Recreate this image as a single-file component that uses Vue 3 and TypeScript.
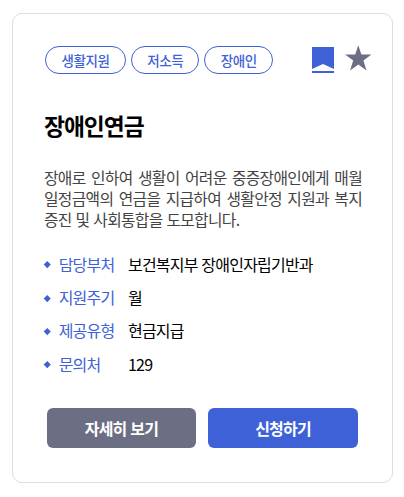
<script setup lang="ts">
interface Detail { label: string; value: string }
const tags: string[] = ['생활지원', '저소득', '장애인']
const lines: string[] = [
  '장애로 인하여 생활이 어려운 중증장애인에게 매월',
  '일정금액의 연금을 지급하여 생활안정 지원과 복지',
  '증진 및 사회통합을 도모합니다.',
]
const details: Detail[] = [
  { label: '담당부처', value: '보건복지부 장애인자립기반과' },
  { label: '지원주기', value: '월' },
  { label: '제공유형', value: '현금지급' },
  { label: '문의처', value: '129' },
]
</script>

<template>
  <article class="card">
    <header class="top">
      <ul class="tags">
        <li v-for="tag in tags" :key="tag" class="tag">{{ tag }}</li>
      </ul>
      <div class="icons">
        <svg class="bookmark" width="22" height="28" viewBox="0 0 22 28"><path d="M0 1H22V23L11 18L0 23Z" fill="#3e61d7" /><path d="M0 25H22V27H0Z" fill="#3e61d7" /></svg>
        <svg class="star" width="27" height="28" viewBox="0 0 27 28"><path d="M13.3 -0.8L16.4 8.6H26.5L18.4 14.6L21.5 24.5L13.3 18.6L5.1 24.5L8.2 14.6L0.1 8.6H10.2Z" fill="#6c6f83" /></svg>
      </div>
    </header>
    <h2 class="title">장애인연금</h2>
    <p class="desc"><span v-for="line in lines" :key="line" class="line">{{ line }}</span></p>
    <dl class="details">
      <div v-for="item in details" :key="item.label" class="row">
        <dt>{{ item.label }}</dt>
        <dd>{{ item.value }}</dd>
      </div>
    </dl>
    <div class="actions">
      <button class="btn gray">자세히 보기</button>
      <button class="btn blue">신청하기</button>
    </div>
  </article>
</template>

<style>
body { background: #fff; }
</style>
<style scoped>
.card { box-sizing: border-box; width: 381px; height: 470px; margin: 13px 0 0 12px; padding: 32px 31px 0; border: 1px solid #ddd; border-radius: 10px; background: #fff; font-family: "Noto Sans CJK KR", sans-serif; letter-spacing: -0.8px; word-spacing: 1px; }
.top { display: flex; justify-content: space-between; height: 28px; }
.tags { display: flex; gap: 5px; margin: 0; padding: 0 0 0 1px; list-style: none; }
.tag { box-sizing: border-box; height: 28px; padding: 0 15px 0 15.6px; border: 1px solid #3e61d7; border-radius: 14px; color: #3e61d7; font-size: 13.5px; font-weight: 500; line-height: 26px; letter-spacing: -0.42px; white-space: nowrap; }
.icons { display: flex; gap: 11px; margin-right: -11px; }
.icons svg { display: block; overflow: visible; }
.title { margin: 35px 0 0; color: #000; font-size: 22.8px; font-weight: 700; line-height: 34px; letter-spacing: -1.05px; }
.desc { margin: 24px -1px 0 0; color: #444; font-size: 15.8px; line-height: 21px; letter-spacing: -0.68px; }
.line { display: block; text-align: justify; text-align-last: justify; white-space: nowrap; }
.line:last-child { text-align-last: left; }
.details { margin: 17px 0 0; font-size: 16px; }
.row { display: flex; align-items: center; height: 33.3px; }
.row::before { content: ""; width: 4.5px; height: 4.5px; margin: 2px 9.5px 0 0.7px; background: #3e61d7; transform: rotate(45deg); }
dt { width: 69.3px; color: #3e61d7; }
dd { margin: 0; color: #000; }
.actions { display: flex; gap: 12px; margin: 27.8px 0 0 3px; }
.btn { box-sizing: border-box; width: 149px; height: 40px; padding: 0; border: 0; border-radius: 6px; color: #fff; font-family: inherit; font-size: 16px; font-weight: 700; letter-spacing: -0.8px; word-spacing: 1px; }
.gray { background: #6c6f83; }
.blue { width: 150px; background: #3e61d7; }
</style>
